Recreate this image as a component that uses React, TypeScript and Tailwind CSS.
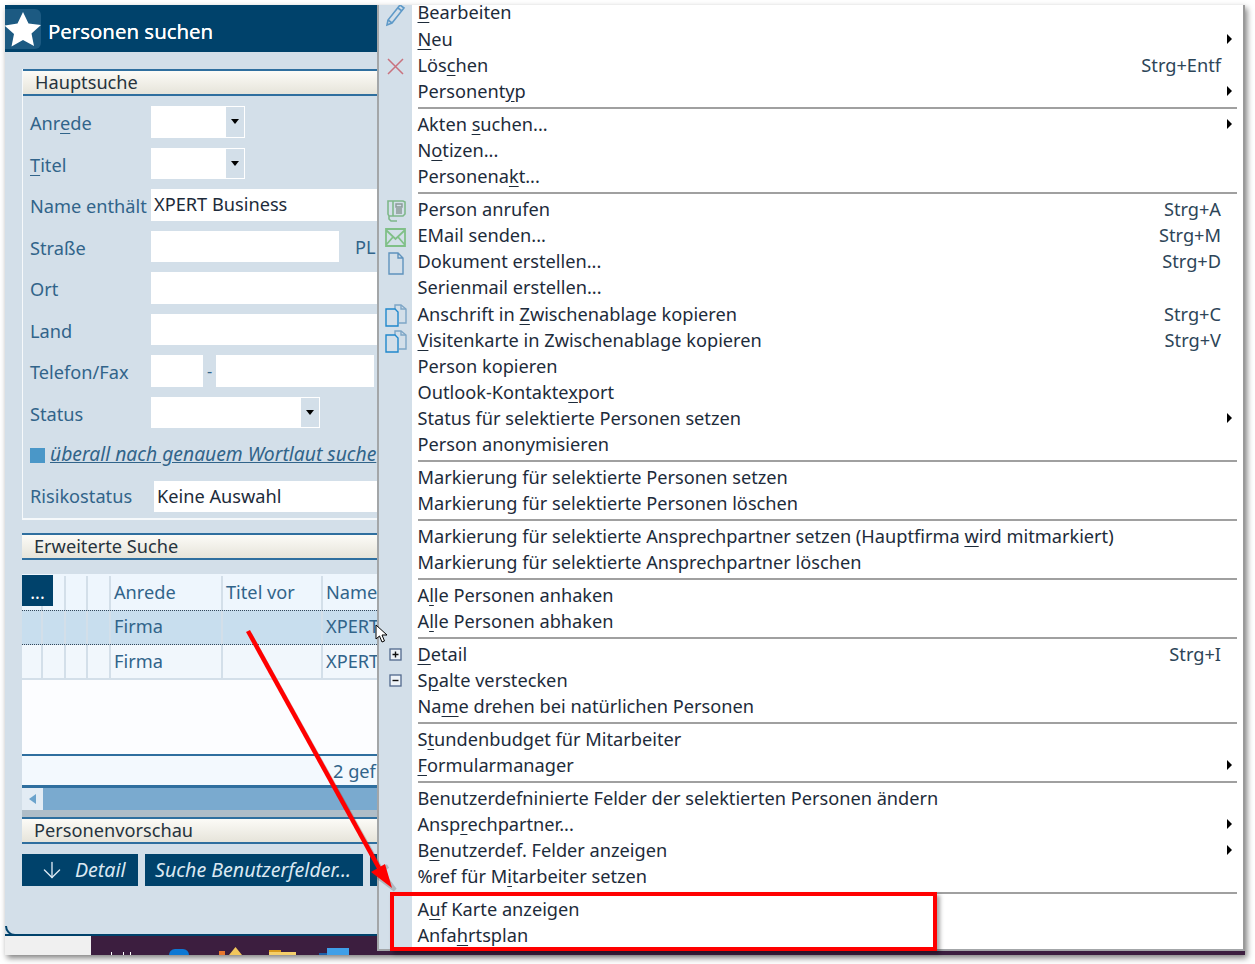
import { ArrowDown } from "lucide-react";

const FONT = "font-['Noto_Sans',sans-serif]";

type MenuRow = { label: string; mark?: number; short?: string; sub?: boolean; icon?: string };

// null is a separator, mark is the index of the underlined letter
const MENU: (MenuRow | null)[] = [
    { label: "Bearbeiten", mark: 0, icon: "pen" },
    { label: "Neu", mark: 0, sub: true },
    { label: "Löschen", mark: 3, short: "Strg+Entf", icon: "cross" },
    { label: "Personentyp", mark: 9, sub: true },
    null,
    { label: "Akten suchen...", mark: 6, sub: true },
    { label: "Notizen...", mark: 1 },
    { label: "Personenakt...", mark: 9 },
    null,
    { label: "Person anrufen", short: "Strg+A", icon: "phone" },
    { label: "EMail senden...", short: "Strg+M", icon: "mail" },
    { label: "Dokument erstellen...", short: "Strg+D", icon: "doc" },
    { label: "Serienmail erstellen..." },
    { label: "Anschrift in Zwischenablage kopieren", mark: 13, short: "Strg+C", icon: "copy" },
    { label: "Visitenkarte in Zwischenablage kopieren", mark: 0, short: "Strg+V", icon: "copy" },
    { label: "Person kopieren" },
    { label: "Outlook-Kontaktexport", mark: 16 },
    { label: "Status für selektierte Personen setzen", sub: true },
    { label: "Person anonymisieren" },
    null,
    { label: "Markierung für selektierte Personen setzen" },
    { label: "Markierung für selektierte Personen löschen" },
    null,
    { label: "Markierung für selektierte Ansprechpartner setzen (Hauptfirma wird mitmarkiert)", mark: 62 },
    { label: "Markierung für selektierte Ansprechpartner löschen" },
    null,
    { label: "Alle Personen anhaken", mark: 1 },
    { label: "Alle Personen abhaken", mark: 1 },
    null,
    { label: "Detail", mark: 0, short: "Strg+I", icon: "plus" },
    { label: "Spalte verstecken", mark: 1, icon: "minus" },
    { label: "Name drehen bei natürlichen Personen", mark: 2 },
    null,
    { label: "Stundenbudget für Mitarbeiter", mark: 1 },
    { label: "Formularmanager", mark: 0, sub: true },
    null,
    { label: "Benutzerdefninierte Felder der selektierten Personen ändern" },
    { label: "Ansprechpartner...", mark: 4, sub: true },
    { label: "Benutzerdef. Felder anzeigen", mark: 1, sub: true },
    { label: "%ref für Mitarbeiter setzen", mark: 10 },
    null,
    { label: "Auf Karte anzeigen", mark: 1 },
    { label: "Anfahrtsplan", mark: 4 },
];

function Marked({ label, mark }: { label: string; mark?: number }) {
    if (mark === undefined) return <>{label}</>;
    return (
        <>
            {label.slice(0, mark)}
            <u className="underline-offset-[3px]">{label[mark]}</u>
            {label.slice(mark + 1)}
        </>
    );
}

function MenuIcon({ name }: { name?: string }) {
    if (name === "pen")
        return (
            <svg width="22" height="24" viewBox="0 0 22 24" fill="none" stroke="#5f9ac8" strokeWidth="1.6">
                <path d="M2 22l1-5L15 2l4 3L7 20z" />
                <path d="M3 17l4 3M13 5l4 3" />
            </svg>
        );
    if (name === "cross")
        return (
            <svg width="19" height="19" viewBox="0 0 19 19" stroke="#c9727e" strokeWidth="1.5">
                <path d="M2 2l15 15M17 2L2 17" />
            </svg>
        );
    if (name === "phone")
        return (
            <svg width="20" height="23" viewBox="0 0 20 23" fill="none" stroke="#7fb88a" strokeWidth="1.6">
                <path d="M7 2H2v13l1 2h4zM7 2h10l2 1v12l-2 2H7zM3 17v3l2 2h6" />
                <path d="M10 5h6v3h-6zM10 10h6M10 12h6M10 14h6" stroke="#8a9a96" strokeWidth="1.4" />
            </svg>
        );
    if (name === "mail")
        return (
            <svg width="21" height="19" viewBox="0 0 21 19" fill="none" stroke="#80c088" strokeWidth="1.8">
                <path d="M1 1h19v17H1zM1 2l9.500 9L20 2M1 17l7-8M20 17l-7-8" />
            </svg>
        );
    if (name === "doc")
        return (
            <svg width="16" height="23" viewBox="0 0 16 23" fill="none" stroke="#5f93bd" strokeWidth="1.4">
                <path d="M1 1h9l5 5v16H1zM10 1v5h5" />
            </svg>
        );
    if (name === "copy")
        return (
            <svg width="22" height="23" viewBox="0 0 22 23" fill="none" strokeWidth="1.4">
                <path d="M10 5V1h6l5 4v14h-7" stroke="#7ea6c6" />
                <path d="M16 1v4h5" stroke="#7ea6c6" />
                <path d="M1 5h9l3 3v14H1z" stroke="#2088cc" />
            </svg>
        );
    if (name === "plus" || name === "minus")
        return (
            <svg width="13" height="13" viewBox="0 0 13 13" fill="none">
                <rect x="1" y="1" width="11" height="11" fill="#eef3f8" stroke="#50688c" strokeWidth="1.3" />
                <path d={name === "plus" ? "M3.500 6.500h6M6.500 3.500v6" : "M3.500 6.500h6"} stroke="#111" strokeWidth="1.4" />
            </svg>
        );
    return null;
}

function ContextMenu() {
    return (
        <div className="absolute left-[372px] top-[-5px] z-10 flex h-[951px] w-[868px] border-x-2 border-b-2 border-[#a3a6a8] border-r-[#9a9a9a] bg-white text-[#1d2b3a]">
            <div className="flex w-[33px] shrink-0 flex-col bg-[#d3dfe9]">
                {MENU.map((row, i) =>
                    row ? (
                        <div key={i} className={`flex h-[26.2px] shrink-0 items-center justify-center ${row.icon === "plus" || row.icon === "minus" ? "" : "pt-[3px]"}`}>
                            <MenuIcon name={row.icon} />
                        </div>
                    ) : (
                        <div key={i} className="h-[6.5px] shrink-0" />
                    )
                )}
            </div>
            <div className="-mt-[0.5px] flex flex-1 flex-col pr-[6px] pl-[5.5px]">
                {MENU.map((row, i) =>
                    row ? (
                        <div key={i} className="flex h-[26.2px] shrink-0 items-center justify-between text-[18.2px] leading-none whitespace-nowrap">
                            <span><Marked label={row.label} mark={row.mark} /></span>
                            {row.short && <span className="mr-[16px] text-[#2d4558]">{row.short}</span>}
                            {row.sub && <span className="mr-[5px] h-0 w-0 border-y-[5px] border-l-[5px] border-y-transparent border-l-black" />}
                        </div>
                    ) : (
                        <div key={i} className="flex h-[6.5px] shrink-0 items-center">
                            <div className="h-[2px] w-full bg-[#a0a0a0]" />
                        </div>
                    )
                )}
            </div>
        </div>
    );
}

function SectionHeader({ title }: { title: string }) {
    return (
        <div className="h-[27px] shrink-0 border-y-2 border-y-[#2f6f9f] bg-gradient-to-b from-[#fcfbf7] to-[#e6e4da] pl-[12px] text-[18.2px] leading-[22px] text-[#26333d]">
            {title}
        </div>
    );
}

function Field({ label, mark, children }: { label: string; mark?: number; children: React.ReactNode }) {
    return (
        <div className="flex h-[31.5px] items-center">
            <span className="w-[121px] shrink-0 pt-[3px] text-[18.2px] leading-none whitespace-nowrap text-[#31648a]">
                <Marked label={label} mark={mark} />
            </span>
            {children}
        </div>
    );
}

function Select({ width }: { width: string }) {
    return (
        <div className={`flex h-[31.5px] justify-end border border-white bg-white ${width}`}>
            <div className="flex w-[18px] items-center justify-center bg-[#d3dfe9]">
                <span className="h-0 w-0 border-x-[4.5px] border-t-[5px] border-x-transparent border-t-black" />
            </div>
        </div>
    );
}

function TableRow({ cells, className }: { cells: string[]; className: string }) {
    const widths = ["w-[21px]", "w-[23px]", "w-[22px]", "w-[23px]", "w-[112px]", "w-[100px]", "w-[100px]"];
    return (
        <div className={`flex shrink-0 ${className}`}>
            {widths.map((w, i) => (
                <div key={i} className={`${w} shrink-0 border-r-2 border-[#d3dfe9] pl-[3px] text-[18.2px] leading-[33px] whitespace-nowrap text-[#31648a] last:border-r-0`}>
                    {cells[i]}
                </div>
            ))}
        </div>
    );
}

function Taskbar() {
    return (
        <div className="flex h-[19px] shrink-0 items-end overflow-hidden">
            <div className="h-full w-[86px] bg-[#f0f0f0]" />
            <div className="flex h-full flex-1 items-end bg-[#3c1e3f] pl-[20px]">
                <div className="flex h-[3px] gap-[6px]">
                    <span className="w-[1px] bg-white" />
                    <span className="ml-[5px] w-[1px] bg-white" />
                    <span className="w-[1px] bg-white" />
                </div>
                <span className="ml-[38px] h-[6px] w-[20px] rounded-t-full bg-[#0d78d4]" />
                <span className="ml-[30px] h-[4px] w-[6px] bg-[#e8772e]" />
                <span className="ml-[4px] h-[8px] w-[13px] bg-[#f2c75c] [clip-path:polygon(50%_0,100%_100%,0_100%)]" />
                <span className="ml-[27px] flex h-[5px] w-[27px] flex-col">
                    <span className="h-[2px] w-[12px] bg-[#d99a1c]" />
                    <span className="h-[3px] bg-[#f5cf6b]" />
                </span>
                <span className="ml-[23px] h-[2px] w-[8px] bg-[#1c5fa8]" />
                <span className="h-[7px] w-[22px] bg-[#3f9fe8]" />
            </div>
        </div>
    );
}

function LeftPanel() {
    return (
        <div className="flex w-[372px] shrink-0 flex-col overflow-hidden bg-[#d3dfe9]">
            <div className="flex h-[47px] shrink-0 items-center bg-[#00426b]">
                <div className="flex h-[40px] w-[36px] items-center justify-center rounded-r-md bg-[#1c5a82]">
                    <svg width="36" height="36" viewBox="0 0 36 36" fill="white">
                        <path d="M18 1l5.500 11.500 12.500 1.500-9.500 8.500 2.500 12.500L18 29 6.500 35.500 9 23-.5 14.500 12.500 12.500z" />
                    </svg>
                </div>
                <span className="ml-[7px] pt-[5px] text-[20.4px] text-white [text-shadow:0_0_0.6px_white]">Personen suchen</span>
            </div>

            {/* the form runs on under the context menu, only its left part is seen */}
            <div className="flex w-[560px] flex-1 flex-col pl-[17px] pt-[17px]">
                <div className="flex h-[451px] shrink-0 flex-col border-b-2 border-l border-white/80">
                    <SectionHeader title="Hauptsuche" />
                    <div className="flex flex-col gap-[10px] pt-[10px] pl-[7px]">
                        <Field label="Anrede" mark={3}><Select width="w-[94px]" /></Field>
                        <Field label="Titel" mark={0}><Select width="w-[94px]" /></Field>
                        <Field label="Name enthält">
                            <div className="flex h-[31.5px] flex-1 items-center bg-white pb-[2px] pl-[3px] text-[18.2px] leading-none text-[#1d2b3a]">XPERT Business</div>
                        </Field>
                        <Field label="Straße">
                            <div className="h-[31.5px] w-[188px] shrink-0 bg-white" />
                            <span className="ml-[16px] pt-[2px] text-[18.2px] leading-none text-[#31648a]">PL</span>
                        </Field>
                        <Field label="Ort"><div className="h-[31.5px] flex-1 bg-white" /></Field>
                        <Field label="Land"><div className="h-[31.5px] flex-1 bg-white" /></Field>
                        <Field label="Telefon/Fax">
                            <div className="h-[31.5px] w-[52px] shrink-0 bg-white" />
                            <span className="w-[13px] text-center text-[#31648a]">-</span>
                            <div className="h-[31.5px] w-[158px] shrink-0 bg-white" />
                        </Field>
                        <Field label="Status"><Select width="w-[169px]" /></Field>
                    </div>
                    <div className="mt-[17px] flex h-[20px] items-center pl-[7px]">
                        <span className="h-[15px] w-[15px] shrink-0 bg-[#4a97c8]" />
                        <span className="ml-[5px] -mt-[2px] text-[19.3px] leading-none whitespace-nowrap italic text-[#31648a] underline">überall nach genauem Wortlaut suche</span>
                    </div>
                    <div className="mt-[16px] flex h-[31px] items-center pl-[7px]">
                        <span className="w-[124px] shrink-0 text-[18.2px] leading-none text-[#31648a]">Risikostatus</span>
                        <div className="flex h-[31px] flex-1 items-center bg-white pl-[3px] text-[18.2px] leading-none text-[#1d2b3a]">Keine Auswahl</div>
                    </div>
                </div>

                <div className="mt-[13px]"><SectionHeader title="Erweiterte Suche" /></div>

                <div className="mt-[14px] flex h-[243px] shrink-0 flex-col overflow-hidden bg-[#fcfdff]">
                    <div className="relative shrink-0">
                        <TableRow cells={["", "", "", "", "Anrede", "Titel vor", "Name"]} className="h-[36px] bg-[#eef6fd] pt-[2px]" />
                        <div className="absolute top-[1px] left-0 flex h-[31px] w-[31px] items-center justify-center bg-[#00426b] pt-[3px] text-[18px] leading-none text-white">...</div>
                    </div>
                    <TableRow cells={["", "", "", "", "Firma", "", "XPERT"]} className="h-[35px] border-y border-dotted border-[#33475a] bg-[#c8deee] [&>div]:leading-[31px]" />
                    <TableRow cells={["", "", "", "", "Firma", "", "XPERT"]} className="h-[35px] border-b-2 border-[#d3dfe9] bg-[#f1f7fc]" />
                    <div className="flex-1" />
                    <div className="h-[31px] shrink-0 border-t-2 border-[#2f6f9f] bg-[#f3f9fe] pl-[311px] text-[18.2px] leading-[30px] whitespace-nowrap text-[#31648a]">
                        2 gef
                    </div>
                    <div className="flex h-[25px] shrink-0 border-t-[3px] border-[#2f6f9f] bg-[#7aaacf]">
                        <div className="flex w-[21px] items-center justify-center bg-[#e3ecf4]">
                            <span className="h-0 w-0 border-y-[5.5px] border-r-[7px] border-y-transparent border-r-[#6ba3cc]" />
                        </div>
                    </div>
                    <div className="h-[7px] shrink-0 bg-[#afbdc8]" />
                </div>

                <SectionHeader title="Personenvorschau" />

                <div className="mt-[10px] flex h-[32px] shrink-0 gap-[7px] text-[19.6px] whitespace-nowrap italic text-[#dbe8f2]">
                    <div className="flex w-[116px] items-center gap-[10px] bg-[#00426b] pl-[17px]">
                        <ArrowDown className="h-[26px] w-[26px] shrink-0" strokeWidth={1.25} />
                        <span>Detail</span>
                    </div>
                    <div className="flex w-[218px] items-center bg-[#00426b] pl-[10px]">Suche Benutzerfelder...</div>
                    <div className="w-[60px] bg-[#00426b]" />
                </div>

                <div className="flex-1" />
            </div>
            <div className="relative h-[2px] shrink-0 bg-[#00426b]">
                <div className="absolute bottom-0 left-0 h-[10px] w-[12px] rounded-bl-[12px] border-b-2 border-l-2 border-[#00426b]" />
            </div>
        </div>
    );
}

function Annotations() {
    return (
        <>
            {/* red arrow from the selected row down to the box */}
            <svg className="absolute top-0 left-0 z-20" width="420" height="900" viewBox="0 0 420 900" fill="none">
                <path d="M250 634L386 878L395 890L375 875L388 866" stroke="#444" strokeOpacity="0.25" strokeWidth="4" />
                <path d="M248 631L379 868" stroke="#f00" strokeWidth="4.500" />
                <path d="M392 888L371 872L385 864z" fill="#f00" />
            </svg>
            {/* mouse pointer */}
            <svg className="absolute top-[624px] left-[375px] z-20" width="14" height="20" viewBox="0 0 14 20">
                <path d="M1 1v14l3.500-3 2.500 6 2.500-1-2.500-6h5z" fill="white" stroke="black" />
            </svg>
            <div className="absolute top-[892px] left-[390px] z-20 h-[59px] w-[547px] border-[4px] border-[#f00] shadow-[3px_3px_4px_rgba(0,0,0,0.35)]" />
        </>
    );
}

export default function App() {
    return (
        <div className={`relative h-[964px] w-[1255px] overflow-hidden bg-white ${FONT}`}>
            <div className="px-[5px] pt-[5px]">
                <div className="relative flex h-[950px] w-[1240px] flex-col overflow-hidden shadow-[2px_3px_6px_rgba(0,0,0,0.5)]">
                    <div className="flex min-h-0 flex-1 bg-[#3c1e3f]">
                        <LeftPanel />
                        <div className="flex-1 bg-[#3c1e3f]" />
                    </div>
                    <Taskbar />
                    <ContextMenu />
                </div>
            </div>
            <Annotations />
        </div>
    );
}
